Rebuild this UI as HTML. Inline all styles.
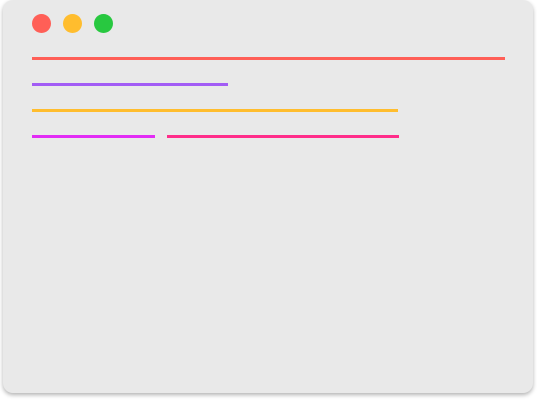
<!DOCTYPE html><html><head><style>
html,body{margin:0;padding:0;background:#fff;width:537px;height:403px;overflow:hidden}
.w{position:absolute;left:3px;top:0px;width:530px;height:393px;background:#e9e9e9;border-radius:10px;box-shadow:0 2px 4px rgba(0,0,0,.3)}
.c{position:absolute;top:14px;width:19px;height:19px;border-radius:50%}
.l{position:absolute;height:2.5px}
</style></head><body>
<div class="w"></div>
<div class="c" style="left:32px;background:#ff5f57"></div>
<div class="c" style="left:63px;background:#ffbd2e"></div>
<div class="c" style="left:94px;background:#28c840"></div>
<div class="l" style="left:32px;top:57px;width:473px;background:#ff5f57"></div>
<div class="l" style="left:32px;top:83px;width:196px;background:#a25cf5"></div>
<div class="l" style="left:32px;top:109px;width:366px;background:#ffbd2e"></div>
<div class="l" style="left:32px;top:135px;width:123px;background:#e22cf5"></div>
<div class="l" style="left:167px;top:135px;width:232px;background:#ff2d8a"></div>
</body></html>
